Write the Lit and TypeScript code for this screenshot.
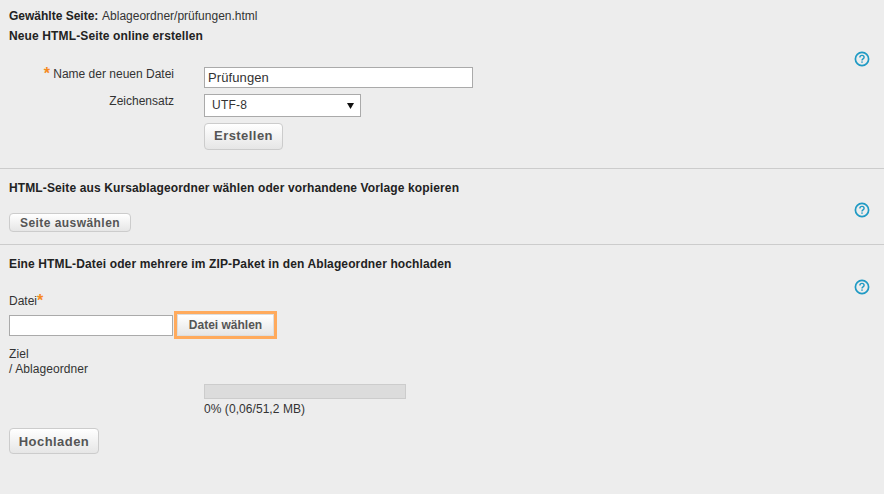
import { LitElement, css, html } from "lit";
import { customElement } from "lit/decorators.js";

const helpIcon = html`
  <svg class="help" width="16" height="16" viewBox="0 0 16 16">
    <circle cx="8" cy="8" r="6.6" fill="none" stroke="#1f9ac4" stroke-width="1.7"></circle>
    <path d="M5.9 6.4c0-1.3 1-2 2.1-2s2.1.7 2.1 1.9c0 1.6-2.1 1.6-2.1 3.1" fill="none" stroke="#1f9ac4" stroke-width="1.4"></path>
    <rect x="7.3" y="10.4" width="1.4" height="1.4" fill="#1f9ac4"></rect>
  </svg>
`;

@customElement("app-root")
export class AppRoot extends LitElement {
  render() {
    return html`
      <section class="first">
        ${helpIcon}
        <div class="selected"><b>Gewählte Seite:</b> Ablageordner/prüfungen.html</div>
        <h3>Neue HTML-Seite online erstellen</h3>
        <div class="form">
          <label class="name"><span class="star">*</span> Name der neuen Datei</label>
          <input class="text" type="text" value="Prüfungen" />
          <label class="charset">Zeichensatz</label>
          <div class="select">
            <span>UTF-8</span>
            <svg width="7" height="6" viewBox="0 0 7 6"><path d="M0 0h7L3.5 6z" fill="#111"></path></svg>
          </div>
          <span></span>
          <button class="btn create">Erstellen</button>
        </div>
      </section>

      <section class="second">
        ${helpIcon}
        <h3>HTML-Seite aus Kursablageordner wählen oder vorhandene Vorlage kopieren</h3>
        <button class="btn pick">Seite auswählen</button>
      </section>

      <section class="third">
        ${helpIcon}
        <h3>Eine HTML-Datei oder mehrere im ZIP-Paket in den Ablageordner hochladen</h3>
        <div class="file-label">Datei<span class="star">*</span></div>
        <div class="file-row">
          <input class="file" type="text" />
          <button class="btn choose">Datei wählen</button>
        </div>
        <div class="target">Ziel<br />/ Ablageordner</div>
        <div class="quota">
          <div class="bar"></div>
          <div class="quota-text">0% (0,06/51,2 MB)</div>
        </div>
        <button class="btn upload">Hochladen</button>
      </section>
    `;
  }

  static styles = css`
    :host {
      display: block;
      height: 494px;
      overflow: hidden;
      background: #ededed;
      color: #333;
      font: 12px/17px "Liberation Sans", Arial, sans-serif;
    }

    section {
      position: relative;
      box-sizing: border-box;
      padding-left: 9px;
    }

    .first {
      height: 169px;
      padding-top: 8px;
      border-bottom: 1px solid #ccc;
    }
    .second {
      height: 76px;
      padding-top: 11px;
      border-bottom: 1px solid #ccc;
    }
    .third {
      padding-top: 11px;
    }

    .help {
      position: absolute;
      right: 14px;
    }
    .first .help { top: 51px; }
    .second .help { top: 33px; }
    .third .help { top: 34px; }

    b, h3 {
      font-weight: 700;
      color: #222;
    }
    b {
      margin-right: 1px;
    }
    h3 {
      margin: 0;
      font-size: 12px;
      line-height: 17px;
      letter-spacing: 0.125px;
    }
    .selected {
      margin-bottom: 3px;
    }

    .form {
      display: grid;
      grid-template-columns: 165px 269px;
      column-gap: 30px;
      row-gap: 6px;
      margin-top: 22px;
      align-items: start;
    }
    .form label {
      text-align: right;
      margin-top: -1px;
    }
    .star {
      color: #f58a1f;
      font-size: 16px;
      font-weight: 700;
      line-height: 12px;
      vertical-align: -1px;
    }

    .text, .file {
      box-sizing: border-box;
      height: 21px;
      margin: 0;
      padding: 0 3px;
      border: 1px solid #aaa;
      border-radius: 0;
      background: #fff;
      color: #333;
      font: 13px "Liberation Sans", Arial, sans-serif;
      letter-spacing: 0.1px;
      outline: none;
    }
    .text { width: 269px; }

    .select {
      display: flex;
      align-items: center;
      justify-content: space-between;
      box-sizing: border-box;
      width: 157px;
      height: 23px;
      padding: 0 6px 0 7px;
      border: 1px solid #aaa;
      background: #fff;
      font-size: 12px;
      letter-spacing: 0.25px;
    }

    .btn {
      display: block;
      box-sizing: border-box;
      margin: 0;
      padding: 0;
      border: 1px solid #ccc;
      border-radius: 4px;
      background: linear-gradient(#fff, #e6e6e6);
      color: #555;
      font: 700 12px "Liberation Sans", Arial, sans-serif;
      letter-spacing: 0.45px;
    }
    .create {
      width: 79px;
      height: 27px;
      padding-bottom: 2px;
      font-size: 13px;
    }
    .pick {
      width: 122px;
      height: 19px;
      margin-top: 16px;
    }
    .upload {
      width: 90px;
      height: 26px;
      margin-top: 10px;
      font-size: 13px;
    }

    .file-label {
      margin-top: 20px;
      line-height: 17px;
    }
    .file-row {
      display: flex;
      align-items: center;
      gap: 1px;
      margin-top: 4px;
    }
    .file {
      width: 164px;
      height: 21px;
    }
    .choose {
      box-sizing: content-box;
      width: 95px;
      height: 20px;
      border: 1px solid #ddd;
      border-radius: 0;
      outline: 3px solid #ffaa5c;
      margin-left: 3px;
      letter-spacing: 0;
    }

    .target {
      margin-top: 11px;
      line-height: 15px;
      letter-spacing: 0.07px;
    }
    .quota {
      margin: 7px 0 0 195px;
    }
    .bar {
      box-sizing: border-box;
      width: 202px;
      height: 15px;
      border: 1px solid #ccc;
      background: #dcdcdc;
    }
    .quota-text {
      margin-top: 2px;
      letter-spacing: 0.06px;
    }
  `;
}
